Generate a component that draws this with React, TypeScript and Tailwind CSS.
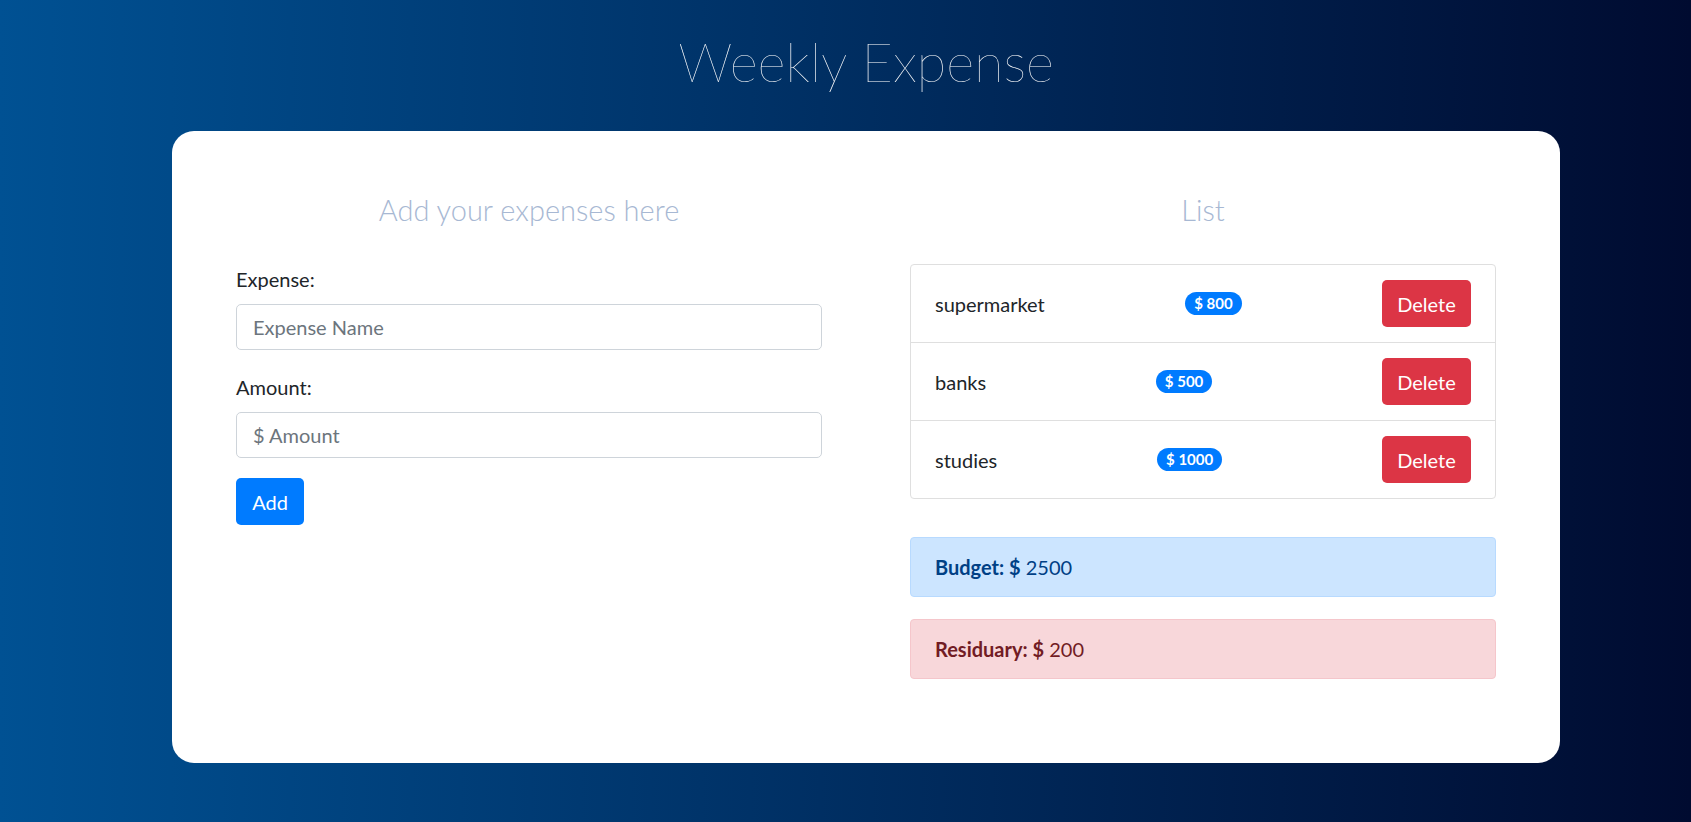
import React from "react";

const expenses = [
  { id: 1, name: "supermarket", amount: 800 },
  { id: 2, name: "banks", amount: 500 },
  { id: 3, name: "studies", amount: 1000 },
];

const sans = "font-['Lato','Open_Sans',sans-serif]";
const heading = "font-['Lato','Inter',sans-serif]";

export default function App() {
  return (
    <div
      className={`min-h-screen w-full bg-[linear-gradient(to_right,#005193,#000b30)] text-[#212529] ${sans}`}
    >
      <div className="ml-[172px] w-[1388px] pt-[30px]">
        <h1 className={`text-center text-[54px] leading-[64px] font-extralight text-white ${heading}`}>
          Weekly Expense
        </h1>

        <div className="mt-[37px] rounded-[22px] bg-white px-16 pt-[61px] pb-[84px]">
          <div className="grid grid-cols-2 gap-[88px]">
            {/* form */}
            <div>
              <h2 className={`mb-[37px] text-center text-[29px] leading-[35px] font-light text-[#a7b8d3] ${heading}`}>
                Add your expenses here
              </h2>
              <form onSubmit={(e) => e.preventDefault()}>
                <div className="mb-[22px]">
                  <label className="mb-[10px] block text-[20px] leading-[30px]">Expense:</label>
                  <input
                    type="text"
                    placeholder="Expense Name"
                    className="block h-[46px] w-full rounded-[5px] border border-[#ced4da] px-4 text-[20px] outline-none placeholder:text-[#6c757d]"
                  />
                </div>
                <div className="mb-5">
                  <label className="mb-[10px] block text-[20px] leading-[30px]">Amount:</label>
                  <input
                    type="number"
                    placeholder="$ Amount"
                    className="block h-[46px] w-full rounded-[5px] border border-[#ced4da] px-4 text-[20px] outline-none placeholder:text-[#6c757d]"
                  />
                </div>
                <button
                  type="submit"
                  className="h-[47px] w-[68px] rounded-[5px] bg-[#007bff] text-[20px] text-white"
                >
                  Add
                </button>
              </form>
            </div>

            {/* list */}
            <div>
              <h2 className={`mb-[37px] text-center text-[29px] leading-[35px] font-light text-[#a7b8d3] ${heading}`}>
                List
              </h2>
              <ul className="rounded-[4px] border border-[#dfdfdf]">
                {expenses.map((item, i) => (
                  <li
                    key={item.id}
                    className={`flex items-center justify-between px-6 py-[15px] ${
                      i > 0 ? "border-t border-[#dfdfdf]" : ""
                    }`}
                  >
                    <span className="text-[20px] leading-[30px]">{item.name}</span>
                    <span className="rounded-full bg-[#007bff] px-[9px] py-[4px] text-[15px] leading-[15px] font-bold text-white">
                      $ {item.amount}
                    </span>
                    <button
                      type="button"
                      className="h-[47px] w-[89px] rounded-[5px] bg-[#dc3545] text-[20px] text-white"
                    >
                      Delete
                    </button>
                  </li>
                ))}
              </ul>

              <div className="mt-[38px] rounded-[4px] border border-[#b8daff] bg-[#cce5ff] px-6 py-[14px] text-[20px] leading-[30px] text-[#004085]">
                <strong>Budget: $</strong> 2500
              </div>
              <div className="mt-[22px] rounded-[4px] border border-[#f5c6cb] bg-[#f8d7da] px-6 py-[14px] text-[20px] leading-[30px] text-[#721c24]">
                <strong>Residuary: $</strong> 200
              </div>
            </div>
          </div>
        </div>
      </div>
    </div>
  );
}
